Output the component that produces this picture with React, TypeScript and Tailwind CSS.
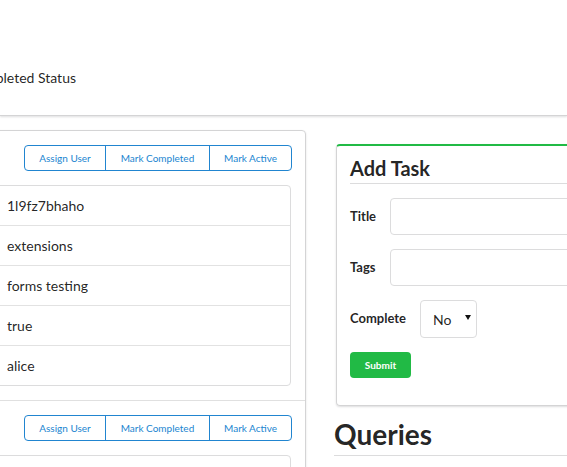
import React from "react";

type Task = { id: string; title: string; tags: string; complete: string; user: string };

const tasks: Task[] = [
  { id: "1l9fz7bhaho", title: "extensions", tags: "forms testing", complete: "true", user: "alice" },
  { id: "2m4kq8dnsra", title: "reports", tags: "billing", complete: "false", user: "bob" },
];

function ButtonGroup() {
  const btn = "h-full flex items-center justify-center text-[10px] text-[#2185d0]";
  return (
    <div className="flex justify-end -mr-[1px]">
      <div className="flex h-[26px] border border-[#2185d0] rounded-[4px] bg-white">
        <button className={`${btn} w-[80px]`}>Assign User</button>
        <button className={`${btn} w-[104px] border-l border-[#2185d0]`}>Mark Completed</button>
        <button className={`${btn} w-[82px] border-l border-[#2185d0]`}>Mark Active</button>
      </div>
    </div>
  );
}

function TaskItem({ task, first }: { task: Task; first: boolean }) {
  const rows = [
    ["ID", task.id],
    ["Title", task.title],
    ["Tags", task.tags],
    ["Complete", task.complete],
    ["User", task.user],
  ];
  return (
    <div className={`px-[14px] pt-[14px] pb-[14px] ${first ? "" : "border-t border-[#e0e0e0]"}`}>
      <ButtonGroup />
      <div className="mt-[14px] border border-[#dcdcdd] rounded-[4px]">
        {rows.map(([k, v], i) => (
          <div
            key={k}
            className={`grid grid-cols-[99px_1fr] items-center text-[14px] ${i > 0 ? "h-[40px] border-t border-[#e2e2e2]" : "h-[39px]"}`}
          >
            <div className="pl-[12px] font-bold">{k}</div>
            <div className="pl-[12px]">{v}</div>
          </div>
        ))}
      </div>
    </div>
  );
}

function Field({ label, children }: { label: string; children: React.ReactNode }) {
  return (
    <div className="flex items-center mt-[14px]">
      <label className="text-[13px] font-bold mr-[14px]">{label}</label>
      {children}
    </div>
  );
}

export default function App() {
  return (
    <div className="w-[567px] h-[467px] overflow-hidden bg-white text-[rgba(0,0,0,0.87)] font-['Lato','Liberation_Sans',sans-serif]">
      {/* Header */}
      <header className="h-[116px] border-b border-[#d4d4d5] shadow-[0_1px_2px_0_rgba(34,36,38,0.15)] pt-[68px]">
        <div className="-ml-[33px] text-[14px] leading-[20px]">Completed Status</div>
      </header>

      <div className="flex items-start mt-[14px] -ml-[120px] w-[1000px]">
        {/* Task list */}
        <div className="w-[426px] shrink-0 border border-[#d4d4d5] rounded-[4px] shadow-[0_1px_2px_0_rgba(34,36,38,0.15)]">
          {tasks.map((t, i) => (
            <TaskItem key={t.id} task={t} first={i === 0} />
          ))}
        </div>

        {/* Right column */}
        <div className="ml-[29px] w-[420px] shrink-0 mt-[14px]">
          <div className="ml-[1px] border border-[#d4d4d5] border-t-2 border-t-[#21ba45] rounded-[4px] shadow-[0_1px_2px_0_rgba(34,36,38,0.15)] px-[13px] pt-[9px] pb-[27px]">
            <div className="text-[20px] leading-[26px] font-bold pb-[2px] border-b border-[#dcdcdd]">Add Task</div>
            <Field label="Title">
              <div className="flex-1 h-[37px] border border-[#dcdcdd] rounded-[4px]" />
            </Field>
            <Field label="Tags">
              <div className="flex-1 h-[37px] border border-[#dcdcdd] rounded-[4px]" />
            </Field>
            <Field label="Complete">
              <div className="w-[57px] h-[38px] border border-[#dcdcdd] rounded-[4px] flex items-center pl-[12px] pr-[5px] justify-between">
                <span className="text-[14px]">No</span>
                <svg width="6" height="5" viewBox="0 0 6 5" className="mb-[3px]">
                  <path d="M0 0h6L3 5z" fill="#111" />
                </svg>
              </div>
            </Field>
            <button className="mt-[14px] w-[61px] h-[26px] rounded-[4px] bg-[#21ba45] text-white text-[10px] font-bold">
              Submit
            </button>
          </div>
          <h1 className="mt-[10px] -ml-[1px] text-[28px] leading-[36px] font-bold pb-[3px] border-b border-[#dcdcdd]">Queries</h1>
        </div>
      </div>
    </div>
  );
}
